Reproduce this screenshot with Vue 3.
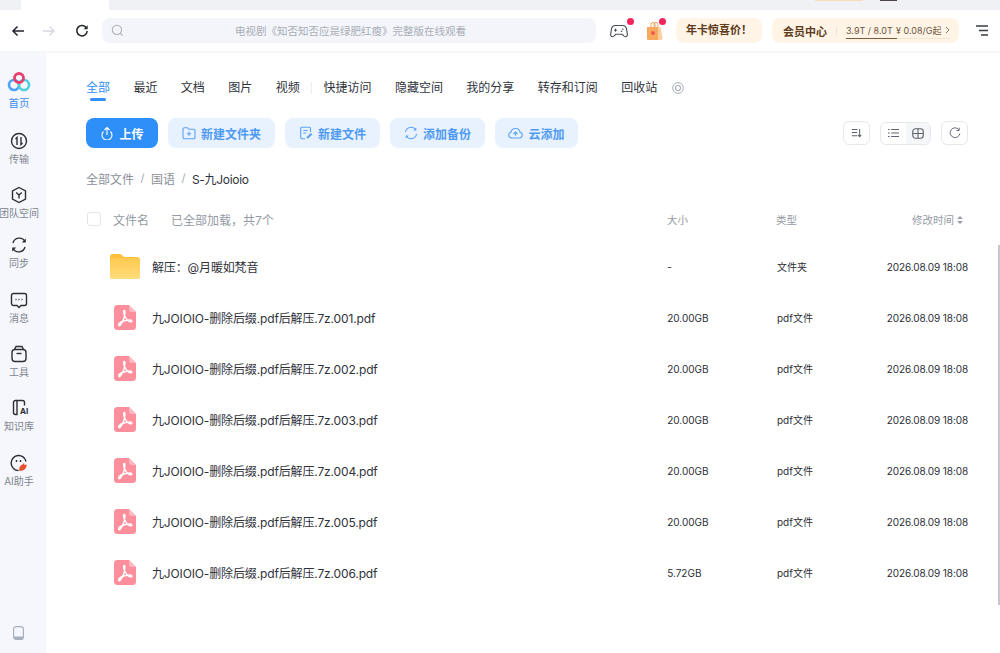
<script setup>
const navItems = [
  { label: '传输', icon: 'transfer', cls: 'n1' },
  { label: '团队空间', icon: 'team', cls: 'n2' },
  { label: '同步', icon: 'sync', cls: 'n3' },
  { label: '消息', icon: 'msg', cls: 'n4' },
  { label: '工具', icon: 'tool', cls: 'n5' },
  { label: '知识库', icon: 'kb', cls: 'n6' },
  { label: 'AI助手', icon: 'ai', cls: 'n7' }
]
const tabsA = ['全部', '最近', '文档', '图片', '视频']
const tabsB = ['快捷访问', '隐藏空间', '我的分享', '转存和订阅', '回收站']
const files = [
  { name: '解压：@月暖如梵音', size: '-', type: '文件夹', folder: true },
  { name: '九JOIOIO-删除后缀.pdf后解压.7z.001.pdf', size: '20.00GB', type: 'pdf文件' },
  { name: '九JOIOIO-删除后缀.pdf后解压.7z.002.pdf', size: '20.00GB', type: 'pdf文件' },
  { name: '九JOIOIO-删除后缀.pdf后解压.7z.003.pdf', size: '20.00GB', type: 'pdf文件' },
  { name: '九JOIOIO-删除后缀.pdf后解压.7z.004.pdf', size: '20.00GB', type: 'pdf文件' },
  { name: '九JOIOIO-删除后缀.pdf后解压.7z.005.pdf', size: '20.00GB', type: 'pdf文件' },
  { name: '九JOIOIO-删除后缀.pdf后解压.7z.006.pdf', size: '5.72GB', type: 'pdf文件' }
]
</script>

<template>
  <div class="page">
    <div class="tabstrip">
      <div class="tab-white"></div>
      <div class="strip-orange"></div>
      <div class="strip-dark"></div>
    </div>

    <header class="toolbar">
      <svg class="tb-ico first" viewBox="0 0 14 14"><path d="M13 7H2M6.500 2.500 2 7l4.500 4.500" fill="none" stroke="#22252b" stroke-width="1.500"/></svg>
      <svg class="tb-ico fwd" viewBox="0 0 14 14"><path d="M1 7h11M7.500 2.500 12 7l-4.500 4.500" fill="none" stroke="#d5d8de" stroke-width="1.300"/></svg>
      <svg class="tb-ico reload" viewBox="0 0 14 14"><path d="M11.600 4.200A5.200 5.200 0 1 0 12.200 7" fill="none" stroke="#22252b" stroke-width="1.500"/><path d="M12.600 1.200v4h-4z" fill="#22252b"/></svg>
      <div class="search">
        <svg class="search-ico" viewBox="0 0 14 14"><circle cx="6.400" cy="6.400" r="5" fill="none" stroke="#a9aeb9" stroke-width="1.100"/><path d="m10 10 2.600 2.600" stroke="#a9aeb9" stroke-width="1.100"/></svg>
        <span class="search-text">电视剧《知否知否应是绿肥红瘦》完整版在线观看</span>
      </div>
      <div class="game">
        <svg width="18" height="15" viewBox="0 0 18 15"><path d="M5 1.500h8c2 0 3 1.200 3.500 3.200l.9 5.600c.2 2-1.800 3.200-3.300 1.800L12.300 10.300H5.700L3.900 12.100C2.400 13.500.4 12.300.6 10.300l.9-5.600C2 2.700 3 1.500 5 1.500Z" fill="none" stroke="#4b4f58" stroke-width="1.100"/><path d="M4 6.200h3M5.500 4.700v3" stroke="#4b4f58" stroke-width="1"/><circle cx="12.800" cy="5.200" r=".8" fill="#4b4f58"/><circle cx="11.500" cy="7.200" r=".8" fill="#4b4f58"/></svg>
        <i class="dot"></i>
      </div>
      <div class="gift">
        <svg width="18" height="20" viewBox="0 0 18 20"><path d="M6 6V3.500a2 2 0 0 1 4 0V6M9 6V3.500a2 2 0 0 1 4 0V6" fill="none" stroke="#eba05c" stroke-width="1"/><path d="M2 6h11v13H3.500A1.500 1.500 0 0 1 2 17.500Z" fill="#f8a95f"/><path d="M13 6h2.500l2 10.500a2 2 0 0 1-2 2.500H13Z" fill="#fbd0a0"/><circle cx="8" cy="12" r="2" fill="#ef5a4f"/></svg>
        <i class="dot"></i>
      </div>
      <div class="promo">年卡惊喜价！</div>
      <div class="vip">
        <b class="vip-title">会员中心</b>
        <i class="vip-sep"></i>
        <div class="vip-stats">
          <span class="vip-used">3.9T / 8.0T</span>
          <span class="vip-price">¥ 0.08/G起</span>
          <svg width="5" height="8" viewBox="0 0 5 8"><path d="m1 1 3 3-3 3" fill="none" stroke="#8a7a68"/></svg>
        </div>
      </div>
      <svg class="menu" viewBox="0 0 12 11"><path d="M0 1h12M3 5.500h9M5 10h7" stroke="#3a3d44" stroke-width="1.300"/></svg>
    </header>

    <div class="body">
      <aside class="sidebar">
        <div class="nav-top">
          <svg width="24" height="20" viewBox="0 0 24 20">
            <circle cx="7" cy="13" r="5" fill="none" stroke="#4fa3f7" stroke-width="2.600"/>
            <circle cx="17" cy="13" r="5" fill="none" stroke="#4fd0e0" stroke-width="2.600"/>
            <circle cx="12" cy="6" r="4.500" fill="none" stroke="#e8406e" stroke-width="2.800"/>
          </svg>
          <span>首页</span>
        </div>
        <div v-for="item in navItems" :key="item.label" class="nav-item" :class="item.cls">
          <svg width="18" height="18" viewBox="0 0 18 18" fill="none" stroke="#2c2f36" stroke-width="1.400">
            <template v-if="item.icon === 'transfer'">
              <circle cx="9" cy="9" r="7.500"/><path d="M7 13V5.500L5.500 7M11 5v7.500l1.500-1.500"/>
            </template>
            <template v-else-if="item.icon === 'team'">
              <path d="M9 1.500 15.500 5v8L9 16.500 2.500 13V5Z"/><path d="m6.200 6.500 2.800 2.500 2.800-2.500M9 9v3.500"/>
            </template>
            <template v-else-if="item.icon === 'sync'">
              <path d="M3 7a6.500 6.500 0 0 1 12-1.500M15 11a6.500 6.500 0 0 1-12 1.500"/><path d="M15.800 2.500v4h-4zM2.200 15.500v-4h4z" fill="#2c2f36" stroke="none"/>
            </template>
            <template v-else-if="item.icon === 'msg'">
              <path d="M3.500 2.500h11a2 2 0 0 1 2 2v8a2 2 0 0 1-2 2h-3.500L9 16.500 7 14.500H3.500a2 2 0 0 1-2-2v-8a2 2 0 0 1 2-2Z"/><path d="M5.500 8.500h1M8.500 8.500h1M11.500 8.500h1"/>
            </template>
            <template v-else-if="item.icon === 'tool'">
              <path d="M4.500 4.500 6 1.500h6l1.500 3"/><rect x="2" y="4.500" width="14" height="12" rx="3"/><path d="M6.500 8.500h5"/>
            </template>
            <template v-else-if="item.icon === 'kb'">
              <path d="M7.500 15.500H5.500a2 2 0 0 1-2-2V3.500a2 2 0 0 1 2-2h7a2 2 0 0 1 2 2v3"/><path d="M7 1.500v14"/>
            </template>
            <template v-else>
              <path d="M16 7.500A7.500 7.500 0 1 0 8.500 16.500"/><path d="M6.500 6v2M10.500 6v2"/><path d="M9.500 17c-1-3 1-6 3-6.500l1.500-1.500.5 2 2-.5c.5 3-2 6.500-7 6.500Z" fill="#e8502f" stroke="none"/>
            </template>
          </svg>
          <span v-if="item.icon === 'kb'" class="ai-tag">AI</span>
          <span>{{ item.label }}</span>
        </div>
        <div class="nav-spacer"></div>
        <svg class="phone" width="11" height="14" viewBox="0 0 11 14"><rect x=".6" y=".6" width="9.800" height="12.800" rx="2.500" fill="none" stroke="#a9b0bd" stroke-width="1.200"/><path d="M1 10.500h9v1a2 2 0 0 1-2 2H3a2 2 0 0 1-2-2z" fill="#a9b0bd"/></svg>
      </aside>

      <main class="content">
        <nav class="tabs">
          <a v-for="(t, i) in tabsA" :key="t" class="tab" :class="{ active: i === 0 }">{{ t }}</a>
          <i class="tab-sep"></i>
          <a v-for="t in tabsB" :key="t" class="tab">{{ t }}</a>
          <svg class="tab-more" width="12" height="12" viewBox="0 0 12 12"><circle cx="6" cy="6" r="5.300" fill="none" stroke="#a8acb5"/><circle cx="6" cy="6" r="2.500" fill="none" stroke="#a8acb5" stroke-width="1.200"/></svg>
        </nav>

        <div class="actions">
          <button class="btn primary w-upload">
            <svg width="14" height="14" viewBox="0 0 14 14" fill="none" stroke="#fff" stroke-width="1.100"><path d="M4.500 4 7 1.500 9.500 4M7 1.800V9"/><path d="M3.500 5.500a5 5 0 1 0 7 0"/></svg>
            上传
          </button>
          <button class="btn w-folder">
            <svg width="14" height="14" viewBox="0 0 14 14" fill="none" stroke="#5aa2f5" stroke-width="1.100"><path d="M1 3a1.300 1.300 0 0 1 1.300-1.300h3L7 3.300h4.700A1.300 1.300 0 0 1 13 4.600v6.900a1.300 1.300 0 0 1-1.300 1.300H2.300A1.300 1.300 0 0 1 1 11.500Z"/><path d="M7 5.500v4.500M4.800 7.700h4.400"/></svg>
            新建文件夹
          </button>
          <button class="btn w-file">
            <svg width="14" height="14" viewBox="0 0 14 14" fill="none" stroke="#5aa2f5" stroke-width="1.100"><path d="M11.500 6V2.500a1.300 1.300 0 0 0-1.300-1.300H3A1.300 1.300 0 0 0 1.700 2.500v9A1.300 1.300 0 0 0 3 12.800h3"/><path d="M4.300 4.500h4.500M4.300 7h3"/><path d="m7.500 12.800.4-2L11.800 7l1.500 1.500-3.800 3.800Z" fill="#5aa2f5" stroke="none"/></svg>
            新建文件
          </button>
          <button class="btn w-backup">
            <svg width="14" height="14" viewBox="0 0 14 14" fill="none" stroke="#5aa2f5" stroke-width="1.100"><path d="M1.500 6a5.600 5.600 0 0 1 10-2.500M12.500 8a5.600 5.600 0 0 1-10 2.500"/><path d="M12.300 1.500v3h-3zM1.700 12.500v-3h3z" fill="#5aa2f5" stroke="none"/></svg>
            添加备份
          </button>
          <button class="btn w-cloud">
            <svg width="15" height="14" viewBox="0 0 15 14" fill="none" stroke="#5aa2f5" stroke-width="1.100"><path d="M4 12H3.500a3 3 0 0 1-.5-5.900 4.600 4.600 0 0 1 9 0 3 3 0 0 1-.5 5.900Z"/><path d="M5.500 8 7.500 6l2 2M7.500 6.200v3.500"/></svg>
            云添加
          </button>
          <div class="actions-gap"></div>
          <button class="ibtn">
            <svg width="11" height="10" viewBox="0 0 14 12" fill="none" stroke="#5d616b" stroke-width="1.300"><path d="M1 1.500h7M1 5.500h7M1 9.500h7M11 1v9.500"/><path d="m9 8.500 2 2.200 2-2.200"/></svg>
          </button>
          <div class="toggle">
            <div class="toggle-on">
              <svg width="11" height="10" viewBox="0 0 14 12" fill="none" stroke="#5d616b" stroke-width="1.300"><path d="M4 1.500h10M4 6h10M4 10.500h10M0 1.500h2M0 6h2M0 10.500h2"/></svg>
            </div>
            <div class="toggle-off">
              <svg width="12" height="11" viewBox="0 0 13 12" fill="none" stroke="#5d616b" stroke-width="1.200"><rect x=".8" y=".8" width="11.400" height="10.400" rx="3"/><path d="M.8 6h11.400M6.500 .8v10.400"/></svg>
            </div>
          </div>
          <button class="ibtn">
            <svg width="12" height="12" viewBox="0 0 13 13" fill="none" stroke="#5d616b"><path d="M10.800 3A5.300 5.300 0 1 0 11.800 7"/><path d="M11 .8v3H8" stroke-width="1"/></svg>
          </button>
        </div>

        <div class="crumbs">
          <span>全部文件</span><em>/</em><span>国语</span><em>/</em><span class="crumb-cur">S-九Joioio</span>
        </div>

        <div class="list-head">
          <i class="check"></i>
          <span class="h-name">文件名</span>
          <span class="h-count">已全部加载，共7个</span>
          <span class="h-size">大小</span>
          <span class="h-type">类型</span>
          <span class="h-time">修改时间
            <svg width="6" height="8" viewBox="0 0 6 8"><path d="M3 0 6 3H0zM3 8 0 5h6z" fill="#9a9ea8"/></svg>
          </span>
        </div>

        <div class="list">
          <div v-for="f in files" :key="f.name" class="row">
            <div class="file-ico">
              <svg v-if="f.folder" width="30" height="25" viewBox="0 0 30 25">
                <defs><linearGradient id="fold" x1="0" y1="0" x2="0" y2="1"><stop offset="0" stop-color="#ffc94f"/><stop offset="1" stop-color="#ffdc7c"/></linearGradient></defs>
                <path d="M0 3a3 3 0 0 1 3-3h7.500l3.500 3h13a3 3 0 0 1 3 3v16a3 3 0 0 1-3 3H3a3 3 0 0 1-3-3Z" fill="#ffbf3c"/>
                <path d="M0 7a3 3 0 0 1 3-3h24a3 3 0 0 1 3 3v15a3 3 0 0 1-3 3H3a3 3 0 0 1-3-3Z" fill="url(#fold)"/>
              </svg>
              <svg v-else width="22" height="25" viewBox="0 0 22 25">
                <path d="M3.500 0H15l7 7v14.500a3.500 3.500 0 0 1-3.500 3.500h-15A3.500 3.500 0 0 1 0 21.500v-18A3.500 3.500 0 0 1 3.500 0Z" fill="#fc8f9b"/>
                <path d="M15 0v4a3 3 0 0 0 3 3h4Z" fill="#fdb9c1"/>
                <path d="M10.300 5.500c-1 0-.9 2.800 1 6.500 1.500 3 4 5 6 4.800 1-.3.600-1.800-1.500-1.800-3.500 0-9 1.500-10.800 3.800-1 1.500.3 2.400 1.300 1.200 1.600-2 4.200-7.500 4.500-11.500.1-1.800.200-3-.5-3Z" fill="none" stroke="#fff" stroke-width="1.500"/>
              </svg>
            </div>
            <span class="f-name">{{ f.name }}</span>
            <span class="f-size">{{ f.size }}</span>
            <span class="f-type">{{ f.type }}</span>
            <span class="f-time">2026.08.09 18:08</span>
          </div>
        </div>
      </main>
    </div>
    <div class="scrollbar"></div>
  </div>
</template>

<style>
html, body { margin: 0; background: #fff; overflow: hidden; }
</style>

<style scoped>
.page {
  width: 1000px;
  height: 653px;
  position: relative;
  overflow: hidden;
  display: flex;
  flex-direction: column;
  font-family: Inter, "Noto Sans CJK SC", sans-serif;
  color: #2b2e36;
}
.tabstrip {
  height: 10px;
  background: #f0f1f5;
  display: flex;
  flex: none;
}
.tab-white { width: 88px; margin-left: 21px; background: #fff; }
.strip-orange { width: 48px; height: 1px; margin-left: 706px; background: #fbdcb8; }
.strip-dark { width: 17px; height: 1px; margin-left: 17px; background: #4b4448; }

.toolbar {
  height: 43px;
  flex: none;
  box-sizing: border-box;
  border-bottom: 2px solid #f5f6fa;
  display: flex;
  align-items: center;
}
.tb-ico { width: 14px; height: 14px; flex: none; }
.first { margin-left: 11px; }
.fwd { margin-left: 17px; }
.reload { margin-left: 19px; }
.search {
  width: 494px;
  height: 25px;
  margin-left: 13px;
  border-radius: 8px;
  background: #f3f5fa;
  display: flex;
  align-items: center;
  flex: none;
}
.search-ico { width: 13px; height: 13px; margin-left: 9px; }
.search-text { margin-left: 111px; font-size: 10.500px; color: #a9adb7; }
.game { position: relative; width: 18px; height: 15px; margin-left: 14px; flex: none; }
.gift { position: relative; width: 18px; height: 20px; margin-left: 17px; flex: none; }
.dot {
  position: absolute;
  width: 7px;
  height: 7px;
  border-radius: 50%;
  background: #f5245c;
  top: -5px;
  right: -6px;
}
.gift .dot { top: -3px; right: -3px; }
.promo {
  width: 86px;
  height: 25px;
  margin-left: 13px;
  border-radius: 8px;
  background: #fff4e6;
  color: #5e3b1c;
  font-size: 11px;
  font-weight: 700;
  line-height: 25px;
  text-align: center;
  flex: none;
}
.vip {
  width: 187px;
  height: 25px;
  margin-left: 10px;
  border-radius: 8px;
  background: #fff4e6;
  display: flex;
  align-items: center;
  flex: none;
}
.vip-title { margin-left: 11px; font-size: 11px; color: #5e3b1c; }
.vip-sep { width: 1px; height: 8px; margin-left: 9px; background: #f0e3d2; }
.vip-stats {
  margin-left: 9px;
  width: 104px;
  height: 16px;
  position: relative;
  display: flex;
  align-items: center;
  gap: 3px;
  font-size: 9px;
  color: #6c553d;
  border-bottom: 1px solid #f3e4d0;
  box-sizing: border-box;
}
.vip-used { width: 47px; margin-right: 0; white-space: nowrap; }
.vip-used::after {
  content: "";
  position: absolute;
  left: 0;
  bottom: -1px;
  width: 51px;
  height: 1px;
  background: #7a5a38;
}
.vip-price { white-space: nowrap; }
.menu { width: 12px; height: 11px; margin-left: 17px; flex: none; }

.body { flex: 1; display: flex; min-height: 0; }
.sidebar {
  width: 46px;
  flex: none;
  background: #f5f7fc;
  display: flex;
  flex-direction: column;
  align-items: flex-start;
}
.nav-top {
  width: 38px;
  margin-top: 19px;
  display: flex;
  flex-direction: column;
  align-items: center;
  font-size: 10.500px;
  color: #3c8ff0;
  line-height: 15px;
  gap: 4px;
}
.nav-item {
  width: 38px;
  position: relative;
  display: flex;
  flex-direction: column;
  align-items: center;
  font-size: 10px;
  line-height: 14px;
  color: #80858f;
  white-space: nowrap;
  gap: 2px;
}
.n1 { margin-top: 21px; }
.n2 { margin-top: 20px; }
.n3 { margin-top: 16px; }
.n4 { margin-top: 21px; }
.n5 { margin-top: 20px; }
.n6 { margin-top: 20px; }
.n7 { margin-top: 21px; }
.ai-tag {
  position: absolute;
  left: 20px;
  top: 7px;
  font-size: 8px;
  line-height: 10px;
  font-weight: 700;
  color: #2c2f36;
}
.nav-spacer { flex: 1; }
.phone { margin: 0 0 13px 13px; }

.content { flex: 1; min-width: 0; padding: 0 32px 0 40px; }
.tabs {
  display: flex;
  align-items: center;
  gap: 23.420px;
  height: 46px;
  padding-top: 2px;
  box-sizing: border-box;
  font-size: 12px;
  color: #30333b;
  margin-top: 11px;
}
.tab { position: relative; line-height: 18px; white-space: nowrap; }
.tab.active { color: #2f8ff5; }
.tab.active::after {
  content: "";
  position: absolute;
  left: 4px;
  right: 4px;
  bottom: -4px;
  height: 3px;
  border-radius: 2px;
  background: #2f8ff5;
}
.tab-sep { width: 1px; height: 12px; background: #eceef2; margin: 0 -12px; }
.tab-more { margin-left: -9px; }

.actions { display: flex; align-items: center; height: 30px; margin-top: 8px; gap: 10px; }
.btn {
  height: 30px;
  border: 0;
  border-radius: 8px;
  background: #e8f2fe;
  color: #4e9af3;
  font-family: inherit;
  font-size: 12px;
  font-weight: 700;
  display: flex;
  align-items: center;
  justify-content: center;
  gap: 5px;
  padding: 0;
  flex: none;
}
.primary { background: #2f8ff9; color: #fff; }
.w-upload { width: 72px; }
.w-folder { width: 107px; }
.w-file { width: 95px; }
.w-backup { width: 95px; }
.w-cloud { width: 83px; }
.actions-gap { flex: 1; }
.ibtn {
  width: 27px;
  height: 24px;
  border: 1px solid #e6e8ee;
  border-radius: 6px;
  background: #fff;
  display: flex;
  align-items: center;
  justify-content: center;
  padding: 0;
  flex: none;
}
.toggle {
  width: 51px;
  height: 23px;
  box-sizing: border-box;
  border: 1px solid #e6e8ee;
  border-radius: 6px;
  display: flex;
  overflow: hidden;
  flex: none;
}
.toggle-on, .toggle-off { flex: 1; display: flex; align-items: center; justify-content: center; }
.toggle-off { background: #f5f6fa; }

.crumbs {
  display: flex;
  align-items: center;
  gap: 6.500px;
  margin-top: 20px;
  height: 20px;
  font-size: 12px;
  color: #8c909a;
}
.crumbs em { font-style: normal; color: #a3a7af; font-size: 11px; }
.crumb-cur { color: #30333b; letter-spacing: -.3px; }

.list-head {
  display: flex;
  align-items: center;
  height: 22px;
  margin-top: 20px;
  font-size: 10.500px;
  color: #959aa4;
}
.check {
  width: 12px;
  height: 12px;
  margin-left: 1px;
  border: 1px solid #e3e5ea;
  border-radius: 3px;
}
.h-name { margin-left: 12px; font-size: 12px; }
.h-count { margin-left: 22px; width: 496px; font-size: 12px; }
.h-size { width: 109px; }
.h-type { flex: 1; }
.h-time { width: 56px; white-space: nowrap; }

.list { margin-top: 11px; }
.row { display: flex; align-items: center; height: 51px; font-size: 11px; }
.file-ico { width: 66px; padding-left: 12px; box-sizing: border-box; display: flex; justify-content: center; flex: none; }
.f-name { font-size: 12px; width: 516px; white-space: nowrap; color: #2f323a; letter-spacing: -.14px; }
.f-size { width: 110px; font-size: 10px; }
.f-type { width: 110px; font-size: 10px; }
.f-time { font-size: 10px; white-space: nowrap; letter-spacing: -.1px; }

.scrollbar {
  position: absolute;
  right: 0;
  top: 245px;
  width: 2px;
  height: 360px;
  background: #c4c6cb;
}
</style>
